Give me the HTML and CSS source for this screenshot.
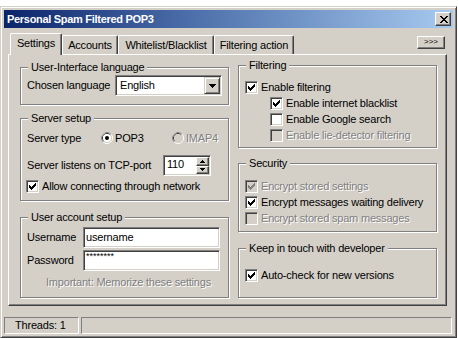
FILE: index.html
```html
<!DOCTYPE html>
<html>
<head>
<meta charset="utf-8">
<title>Personal Spam Filtered POP3</title>
<link rel="stylesheet" href="styles.css">
</head>
<body>
<div class="window">
  <div class="titlebar">
    <span class="title">Personal Spam Filtered POP3</span>
    <span class="close-btn"><svg width="8" height="7" viewBox="0 0 8 7" shape-rendering="crispEdges"><path d="M0 0h2v1h-2zM6 0h2v1h-2zM1 1h2v1h-2zM5 1h2v1h-2zM2 2h4v1h-4zM3 3h2v1h-2zM2 4h4v1h-4zM1 5h2v1h-2zM5 5h2v1h-2zM0 6h2v1h-2zM6 6h2v1h-2z"/></svg></span>
  </div>

  <div class="tabctl">
    <div class="tabrow">
      <div class="tab tab-active w-settings">Settings</div>
      <div class="tab w-accounts">Accounts</div>
      <div class="tab w-white">Whitelist/Blacklist</div>
      <div class="tab w-filter">Filtering action</div>
      <div class="more-btn">&gt;&gt;&gt;</div>
    </div>

    <div class="panel">
      <div class="col col-left">
        <div class="group g-lang">
          <span class="glabel">User-Interface language</span>
          <div class="row r-lang">
            <span class="lbl lbl-lang">Chosen language</span>
            <div class="combo">
              <span class="combo-val">English</span>
              <span class="combo-btn"><svg width="7" height="4" viewBox="0 0 7 4" shape-rendering="crispEdges"><path d="M0 0h7v1h-7zM1 1h5v1h-5zM2 2h3v1h-3zM3 3h1v1h-1z"/></svg></span>
            </div>
          </div>
        </div>

        <div class="group g-server">
          <span class="glabel">Server setup</span>
          <div class="row r-type">
            <span class="lbl lbl-type">Server type</span>
            <span class="opt opt1">
              <svg class="radio" width="12" height="12" viewBox="0 0 12 12"><circle cx="6" cy="6" r="5.5" fill="none" stroke="#fff"/><path d="M2.11 9.89A5.5 5.5 0 0 1 9.89 2.11" fill="none" stroke="#808080"/><circle cx="6" cy="6" r="4.5" fill="none" stroke="#D4D0C8"/><path d="M2.82 9.18A4.5 4.5 0 0 1 9.18 2.82" fill="none" stroke="#404040"/><circle cx="6" cy="6" r="4" fill="#fff"/><circle cx="6" cy="6" r="2" fill="#000"/></svg>
              <span>POP3</span>
            </span>
            <span class="opt disabled">
              <svg class="radio" width="12" height="12" viewBox="0 0 12 12"><circle cx="6" cy="6" r="5.5" fill="none" stroke="#fff"/><path d="M2.11 9.89A5.5 5.5 0 0 1 9.89 2.11" fill="none" stroke="#808080"/><circle cx="6" cy="6" r="4.5" fill="none" stroke="#D4D0C8"/><path d="M2.82 9.18A4.5 4.5 0 0 1 9.18 2.82" fill="none" stroke="#404040"/><circle cx="6" cy="6" r="4" fill="#D4D0C8"/></svg>
              <span>IMAP4</span>
            </span>
          </div>
          <div class="row r-port">
            <span class="lbl lbl-port">Server listens on TCP-port</span>
            <div class="spin">
              <span class="spin-val">110</span>
              <span class="spin-btns">
                <span class="sbtn sbtn-up"><svg width="5" height="3" viewBox="0 0 5 3" shape-rendering="crispEdges"><path d="M2 0h1v1h-1zM1 1h3v1h-3zM0 2h5v1h-5z"/></svg></span>
                <span class="sbtn sbtn-dn"><svg width="5" height="3" viewBox="0 0 5 3" shape-rendering="crispEdges"><path d="M0 0h5v1h-5zM1 1h3v1h-3zM2 2h1v1h-1z"/></svg></span>
              </span>
            </div>
          </div>
          <div class="row cbrow r-allow">
            <span class="cb"><svg width="7" height="7" viewBox="0 0 7 7" shape-rendering="crispEdges"><path d="M6 0h1v1h-1zM5 1h2v1h-2zM0 2h1v1h-1zM4 2h3v1h-3zM0 3h2v1h-2zM3 3h3v1h-3zM0 4h5v1h-5zM1 5h3v1h-3zM2 6h1v1h-1z"/></svg></span>
            <span class="cbtext">Allow connecting through network</span>
          </div>
        </div>

        <div class="group g-user">
          <span class="glabel">User account setup</span>
          <div class="row r-field">
            <span class="lbl lbl-field">Username</span>
            <div class="edit"><span>username</span></div>
          </div>
          <div class="row r-field">
            <span class="lbl lbl-field">Password</span>
            <div class="edit edit-pw"><span class="pw">********</span></div>
          </div>
          <div class="note disabled">Important: Memorize these settings</div>
        </div>
      </div>

      <div class="col col-right">
        <div class="group g-filter">
          <span class="glabel">Filtering</span>
          <div class="row cbrow">
            <span class="cb"><svg width="7" height="7" viewBox="0 0 7 7" shape-rendering="crispEdges"><path d="M6 0h1v1h-1zM5 1h2v1h-2zM0 2h1v1h-1zM4 2h3v1h-3zM0 3h2v1h-2zM3 3h3v1h-3zM0 4h5v1h-5zM1 5h3v1h-3zM2 6h1v1h-1z"/></svg></span>
            <span class="cbtext">Enable filtering</span>
          </div>
          <div class="row cbrow indent">
            <span class="cb"><svg width="7" height="7" viewBox="0 0 7 7" shape-rendering="crispEdges"><path d="M6 0h1v1h-1zM5 1h2v1h-2zM0 2h1v1h-1zM4 2h3v1h-3zM0 3h2v1h-2zM3 3h3v1h-3zM0 4h5v1h-5zM1 5h3v1h-3zM2 6h1v1h-1z"/></svg></span>
            <span class="cbtext">Enable internet blacklist</span>
          </div>
          <div class="row cbrow indent">
            <span class="cb"></span>
            <span class="cbtext">Enable Google search</span>
          </div>
          <div class="row cbrow indent disabled">
            <span class="cb cb-dis"></span>
            <span class="cbtext">Enable lie-detector filtering</span>
          </div>
        </div>

        <div class="group g-sec">
          <span class="glabel">Security</span>
          <div class="row cbrow disabled">
            <span class="cb cb-dis"><svg width="7" height="7" viewBox="0 0 7 7" shape-rendering="crispEdges" fill="#808080"><path d="M6 0h1v1h-1zM5 1h2v1h-2zM0 2h1v1h-1zM4 2h3v1h-3zM0 3h2v1h-2zM3 3h3v1h-3zM0 4h5v1h-5zM1 5h3v1h-3zM2 6h1v1h-1z"/></svg></span>
            <span class="cbtext">Encrypt stored settings</span>
          </div>
          <div class="row cbrow">
            <span class="cb"><svg width="7" height="7" viewBox="0 0 7 7" shape-rendering="crispEdges"><path d="M6 0h1v1h-1zM5 1h2v1h-2zM0 2h1v1h-1zM4 2h3v1h-3zM0 3h2v1h-2zM3 3h3v1h-3zM0 4h5v1h-5zM1 5h3v1h-3zM2 6h1v1h-1z"/></svg></span>
            <span class="cbtext">Encrypt messages waiting delivery</span>
          </div>
          <div class="row cbrow disabled">
            <span class="cb cb-dis"></span>
            <span class="cbtext">Encrypt stored spam messages</span>
          </div>
        </div>

        <div class="group g-keep">
          <span class="glabel">Keep in touch with developer</span>
          <div class="row cbrow">
            <span class="cb"><svg width="7" height="7" viewBox="0 0 7 7" shape-rendering="crispEdges"><path d="M6 0h1v1h-1zM5 1h2v1h-2zM0 2h1v1h-1zM4 2h3v1h-3zM0 3h2v1h-2zM3 3h3v1h-3zM0 4h5v1h-5zM1 5h3v1h-3zM2 6h1v1h-1z"/></svg></span>
            <span class="cbtext">Auto-check for new versions</span>
          </div>
        </div>
      </div>
    </div>
  </div>

  <div class="status">
    <div class="sp sp1">Threads: 1</div>
    <div class="sp sp2"></div>
  </div>
</div>
</body>
</html>
```

FILE: styles.css
```css
* { box-sizing: border-box; }
html, body { margin: 0; padding: 0; }
body {
  background: #fff;
  font-family: "Liberation Sans", Arial, sans-serif;
  font-size: 11px;
  line-height: 13px;
  color: #000;
  letter-spacing: -0.2px;
}

.window {
  margin-top: 6px;
  width: 457px;
  height: 332px;
  background: #D4D0C8;
  border: 1px solid;
  border-color: #D4D0C8 #404040 #404040 #D4D0C8;
  box-shadow: inset 1px 1px 0 #fff, inset -1px -1px 0 #808080;
  padding: 3px;
  display: flex;
  flex-direction: column;
}

/* raised / sunken bevels */
.close-btn, .more-btn, .combo-btn, .sbtn {
  background: #D4D0C8;
  border: 1px solid;
  border-color: #fff #404040 #404040 #fff;
  box-shadow: inset -1px -1px 0 #808080;
}
.combo, .spin, .edit, .cb {
  background: #fff;
  border: 1px solid;
  border-color: #808080 #fff #fff #808080;
  box-shadow: inset 1px 1px 0 #404040, inset -1px -1px 0 #D4D0C8;
}

.titlebar {
  height: 18px;
  flex: none;
  display: flex;
  align-items: center;
  padding-left: 3px;
  background: linear-gradient(to right, #0A246A 0%, #4A6CA8 40%, #A6CAF0 100%);
}
.title {
  flex: 1;
  color: #fff;
  font-weight: bold;
  letter-spacing: -0.3px;
  line-height: 18px;
}
.close-btn {
  width: 16px;
  height: 14px;
  margin-right: 2px;
  display: flex;
  align-items: center;
  justify-content: center;
  padding-left: 1px;
}

.tabctl {
  margin: 5px 0 0 4px;
  width: 439px;
  flex: none;
}
.tabrow {
  display: flex;
  align-items: flex-end;
  height: 21px;
  padding-left: 2px;
}
.tab {
  flex: none;
  height: 19px;
  border-top: 1px solid #fff;
  border-left: 1px solid #fff;
  border-right: 1px solid #404040;
  border-radius: 2px 2px 0 0;
  box-shadow: inset -1px 0 0 #808080;
  text-align: center;
  padding-top: 3px;
  white-space: nowrap;
}
.tab-active {
  height: 22px;
  margin-bottom: -1px;
  position: relative;
  z-index: 1;
  background: #D4D0C8;
}
.w-settings { width: 52px; }
.w-accounts { width: 56px; }
.w-white { width: 96px; }
.w-filter { width: 80px; }

.more-btn {
  margin-left: auto;
  margin-right: 2px;
  align-self: flex-start;
  margin-top: 3px;
  width: 28px;
  height: 13px;
  font-size: 8px;
  line-height: 10px;
  letter-spacing: 0;
  text-align: center;
}

.panel {
  height: 252px;
  border: 1px solid;
  border-color: #fff #404040 #404040 #fff;
  box-shadow: inset -1px -1px 0 #808080;
  display: flex;
  padding-left: 11px;
  column-gap: 9px;
}
.col { display: flex; flex-direction: column; flex: none; }
.col-left { width: 209px; }
.col-right { width: 199px; }

.group {
  position: relative;
  flex: none;
  border: 1px solid #808080;
  box-shadow: inset 1px 1px 0 #fff, 1px 1px 0 #fff;
  padding-left: 6px;
}
.glabel {
  position: absolute;
  top: -7px;
  left: 7px;
  padding: 0 3px;
  background: #D4D0C8;
  white-space: nowrap;
}
.g-lang { margin-top: 12px; height: 38px; padding-top: 7px; }
.g-server { margin-top: 13px; height: 83px; padding-top: 7px; }
.g-user { margin-top: 16px; height: 81px; padding-top: 9px; }
.g-filter { margin-top: 10px; height: 83px; padding-top: 14px; }
.g-sec { margin-top: 15px; height: 69px; padding-top: 15px; }
.g-keep { margin-top: 16px; height: 50px; padding-top: 19px; }

.row { display: flex; align-items: center; white-space: nowrap; }
.lbl { flex: none; }
.r-lang { height: 21px; }
.lbl-lang { width: 88px; }
.r-type { height: 24px; }
.lbl-type { width: 74px; }
.r-port { height: 30px; }
.lbl-port { width: 136px; }
.r-field { height: 21px; }
.r-field + .r-field { margin-top: 2px; }
.lbl-field { width: 56px; }

.combo {
  flex: none;
  width: 107px;
  height: 21px;
  padding: 1px;
  display: flex;
}
.combo-val { flex: 1; padding-left: 3px; line-height: 17px; }
.combo-btn {
  flex: none;
  width: 16px;
  height: 17px;
  border-color: #D4D0C8 #404040 #404040 #D4D0C8;
  box-shadow: inset 1px 1px 0 #fff, inset -1px -1px 0 #808080;
  display: flex;
  align-items: center;
  justify-content: center;
}

.opt { display: flex; align-items: center; flex: none; }
.opt1 { width: 71px; }
.radio { flex: none; margin-right: 2px; }

.spin {
  flex: none;
  width: 48px;
  height: 21px;
  padding: 1px;
  display: flex;
}
.spin-val { flex: 1; padding-left: 2px; padding-top: 1px; line-height: 13px; }
.spin-btns { display: flex; flex-direction: column; width: 13px; flex: none; }
.sbtn { display: flex; align-items: center; justify-content: center; }
.sbtn-up { height: 9px; }
.sbtn-dn { height: 8px; }

.cbrow { height: 16px; align-items: flex-start; }
.r-allow { height: 14px; margin-left: -1px; }
.cb {
  flex: none;
  width: 13px;
  height: 13px;
  margin-top: 1px;
  margin-right: 3px;
  display: flex;
  align-items: center;
  justify-content: center;
}
.r-allow .cb { margin-top: 0; }
.cb-dis { background: #D4D0C8; }
.cbtext { line-height: 15px; }
.r-allow .cbtext { line-height: 13px; }
.indent { padding-left: 25px; }

.edit {
  flex: none;
  width: 137px;
  height: 21px;
  padding-left: 2px;
  display: flex;
  align-items: center;
}
.edit-pw { align-items: flex-start; }
.pw {
  font-size: 9px;
  line-height: 9px;
  margin-top: 1px;
  letter-spacing: 0;
}

.note {
  margin-top: 5px;
  padding-right: 17px;
  text-align: right;
  white-space: nowrap;
}
.disabled { color: #808080; text-shadow: 1px 1px 0 #fff; }

.status {
  margin-top: 11px;
  height: 17px;
  flex: none;
  display: flex;
  column-gap: 2px;
}
.sp {
  border: 1px solid;
  border-color: #808080 #fff #fff #808080;
  line-height: 15px;
  padding-left: 10px;
}
.sp1 { width: 75px; flex: none; }
.sp2 { flex: 1; margin-right: 1px; }
```
